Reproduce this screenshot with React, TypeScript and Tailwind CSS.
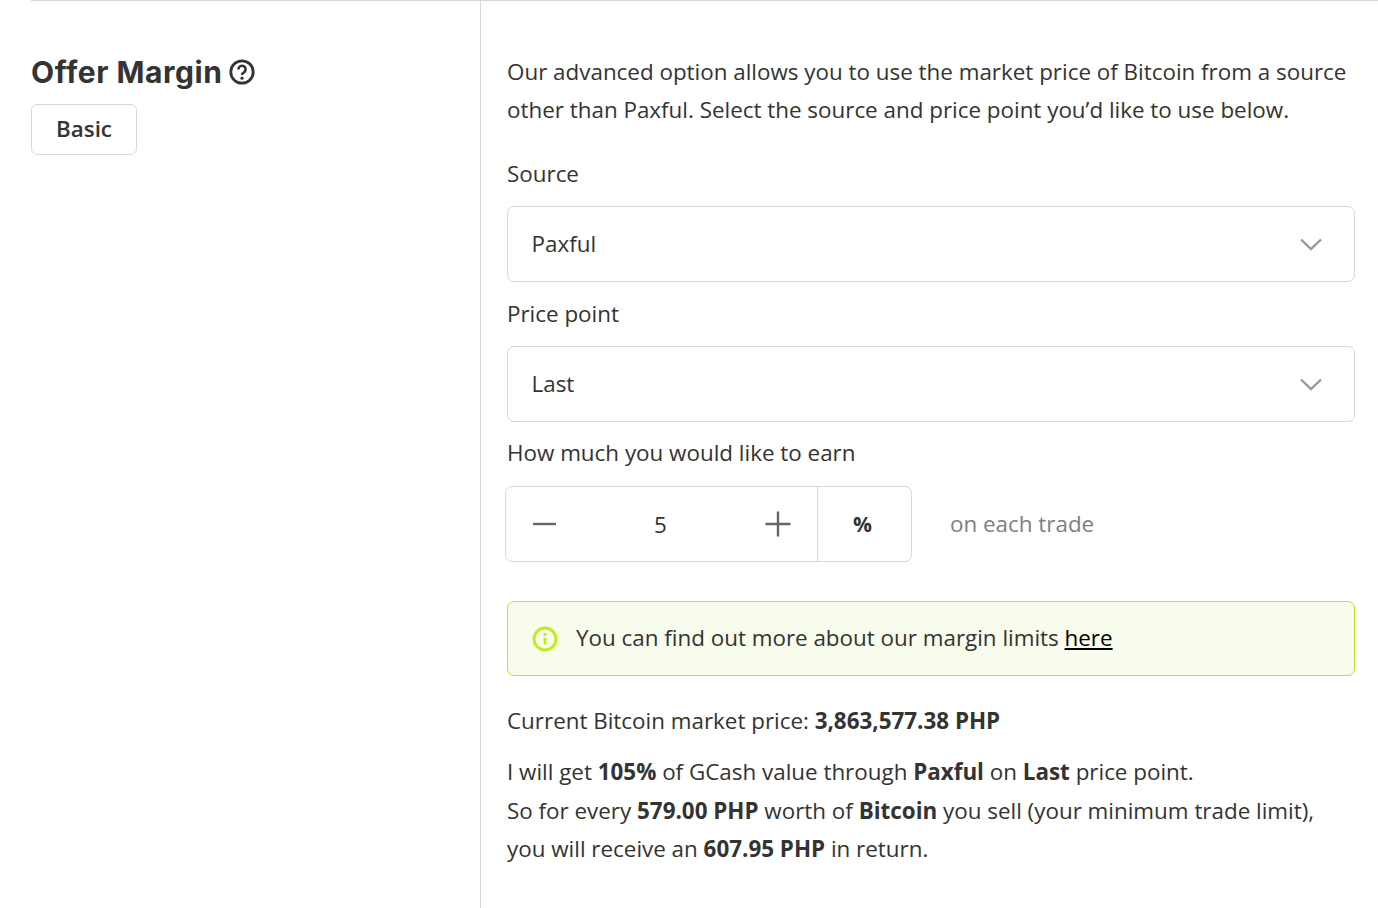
function SelectBox({ value }: { value: string }) {
  return (
    <div className="h-[76px] rounded-[7px] border border-[#d8d8d8] flex items-center justify-between pl-[23.5px] pr-[32px] bg-white">
      <span className="text-[#333333]">{value}</span>
      <svg width="22" height="13" viewBox="0 0 22 13" fill="none" className="text-[#999999]">
        <path d="M1 1.5 L11 11 L21 1.5" stroke="currentColor" strokeWidth="2.4" />
      </svg>
    </div>
  );
}

export default function App() {
  return (
    <div className="h-[908px] w-[1378px] overflow-hidden bg-white pl-[31px] text-[22.4px] leading-[38px] text-[#333333] font-['Open_Sans',sans-serif]">
      <div className="flex h-full border-t border-[#d8d8d8]">
        {/* Left column */}
        <div className="w-[450px] shrink-0 border-r border-[#d8d8d8] pt-[52px]">
          <div className="flex items-center gap-[6px]">
            <h2 className="font-['Inter',sans-serif] text-[30px] leading-[38px] tracking-[0.55px] font-bold text-[#333333]">Offer Margin</h2>
            <svg width="26" height="26" viewBox="0 0 26 26" fill="none">
              <circle cx="13" cy="13" r="11.2" stroke="#333333" strokeWidth="2.8" />
              <path d="M9.4 10.4a3.6 3.6 0 1 1 5.5 3c-1.2.7-1.9 1.2-1.9 2.5" stroke="#333333" strokeWidth="2.6" />
              <circle cx="13" cy="19.2" r="1.6" fill="#333333" />
            </svg>
          </div>
          <button className="mt-[13px] h-[51px] w-[106px] rounded-[6px] border border-[#d8d8d8] pb-[2px] text-[22.4px] font-semibold text-[#333333]">
            Basic
          </button>
        </div>

        {/* Right column */}
        <div className="flex-1 pl-[26px] pr-[23px] pt-[52px]">
          <p>
            Our advanced option allows you to use the market price of Bitcoin from a source other than Paxful. Select the source and price point you’d like to use below.
          </p>

          <div className="mt-[26px] mb-[13px]">Source</div>
          <SelectBox value="Paxful" />

          <div className="mt-[13px] mb-[13px]">Price point</div>
          <SelectBox value="Last" />

          <div className="mt-[12px] mb-[14px]">How much you would like to earn</div>
          <div className="flex items-center">
            <div className="-ml-[2px] flex h-[76px] w-[407px] rounded-[7px] border border-[#d8d8d8]">
              <div className="flex w-[312px] items-center justify-between pl-[27px] pr-[26px] border-r border-[#d8d8d8]">
                <svg width="23" height="4" viewBox="0 0 23 4" fill="none" className="text-[#666666]">
                  <path d="M0 2H23" stroke="currentColor" strokeWidth="2.4" />
                </svg>
                <span className="pt-[2px]">5</span>
                <svg width="26" height="26" viewBox="0 0 26 26" fill="none" className="text-[#666666]">
                  <path d="M0.5 13H25.5M13 0.5V25.5" stroke="currentColor" strokeWidth="2.4" />
                </svg>
              </div>
              <div className="-mt-[1px] flex flex-1 items-center justify-center pr-[4px] text-[21px] font-bold">%</div>
            </div>
            <span className="ml-[38px] text-[#808080]">on each trade</span>
          </div>

          <div className="mt-[39px] flex h-[75px] items-center rounded-[7px] border border-[#bde52c] bg-[#f8fcec] pl-[24px]">
            <svg width="26" height="26" viewBox="0 0 26 26" fill="none">
              <circle cx="13" cy="13" r="11" stroke="#bdef1a" strokeWidth="3" />
              <rect x="11.6" y="11.5" width="2.8" height="7" fill="#bdef1a" />
              <circle cx="13" cy="8.3" r="1.6" fill="#bdef1a" />
            </svg>
            <span className="ml-[18px] -mt-[2px]">
              You can find out more about our margin limits <a className="text-black underline">here</a>
            </span>
          </div>

          <p className="mt-[26px]">
            Current Bitcoin market price: <b>3,863,577.38 PHP</b>
          </p>
          <p className="mt-[13px] leading-[38.5px]">
            I will get <b>105%</b> of GCash value through <b>Paxful</b> on <b>Last</b> price point.
            <br />
            So for every <b>579.00 PHP</b> worth of <b>Bitcoin</b> you sell (your minimum trade limit),
            <br />
            you will receive an <b>607.95 PHP</b> in return.
          </p>
        </div>
      </div>
    </div>
  );
}
